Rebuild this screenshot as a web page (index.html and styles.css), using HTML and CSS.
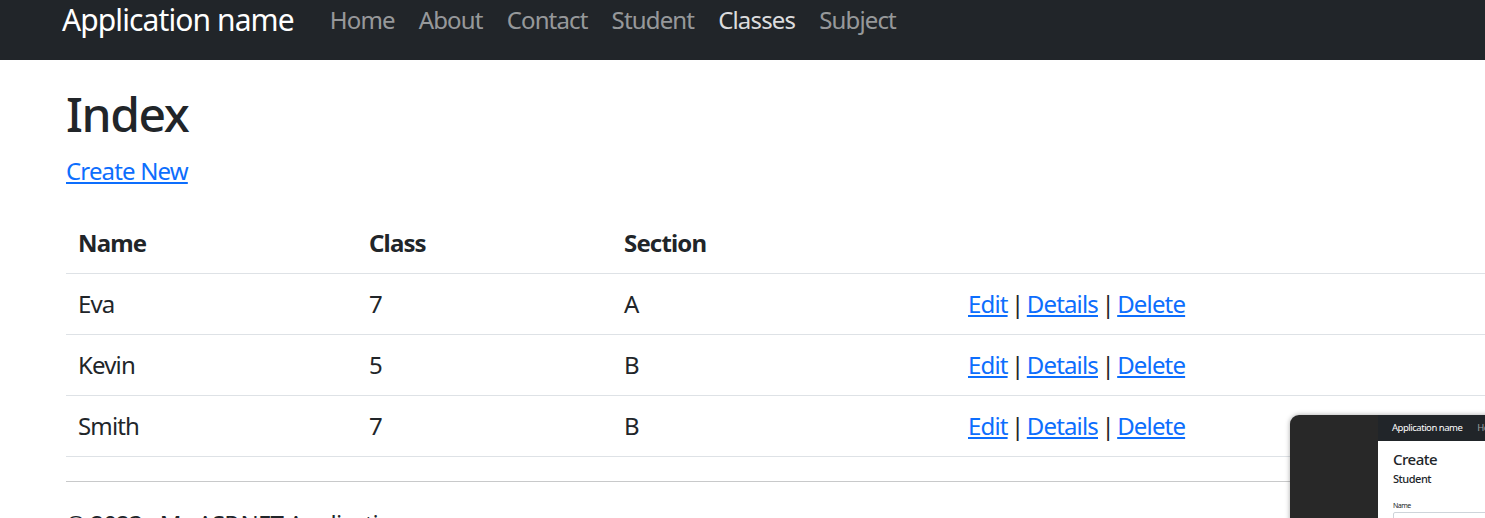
FILE: index.html
```html
<!DOCTYPE html>
<html lang="en">
<head>
<meta charset="utf-8">
<title>Index - My ASP.NET Application</title>
<link rel="stylesheet" href="styles.css">
</head>
<body>
<nav class="navbar">
  <a class="brand" href="#">Application name</a>
  <ul class="nav">
    <li><a class="nav-link" href="#">Home</a></li>
    <li><a class="nav-link" href="#">About</a></li>
    <li><a class="nav-link" href="#">Contact</a></li>
    <li><a class="nav-link" href="#">Student</a></li>
    <li><a class="nav-link active" href="#">Classes</a></li>
    <li><a class="nav-link" href="#">Subject</a></li>
  </ul>
</nav>
<main class="content">
  <h1 class="title">Index</h1>
  <p class="create"><a href="#">Create New</a></p>
  <table class="table">
    <colgroup>
      <col class="c-name"><col class="c-class"><col class="c-section"><col>
    </colgroup>
    <thead>
      <tr><th>Name</th><th>Class</th><th>Section</th><th></th></tr>
    </thead>
    <tbody>
      <tr><td>Eva</td><td>7</td><td>A</td><td class="actions"><a href="#">Edit</a> | <a href="#">Details</a> | <a href="#">Delete</a></td></tr>
      <tr><td>Kevin</td><td>5</td><td>B</td><td class="actions"><a href="#">Edit</a> | <a href="#">Details</a> | <a href="#">Delete</a></td></tr>
      <tr><td>Smith</td><td>7</td><td>B</td><td class="actions"><a href="#">Edit</a> | <a href="#">Details</a> | <a href="#">Delete</a></td></tr>
    </tbody>
  </table>
  <hr class="rule">
  <footer class="footer"><p>&copy; 2023 - My ASP.NET Application</p></footer>
</main>
<div class="thumb">
  <div class="thumb-page">
    <div class="thumb-nav"><span class="thumb-brand">Application name</span><span class="thumb-link">Home</span></div>
    <div class="thumb-body">
      <div class="thumb-h">Create</div>
      <div class="thumb-sub">Student</div>
      <div class="thumb-label">Name</div>
      <div class="thumb-input"></div>
    </div>
  </div>
</div>
</body>
</html>
```

FILE: styles.css
```css
html, body {
  margin: 0;
  padding: 0;
  overflow: hidden;
  height: 100%;
}
body {
  font-family: "Noto Sans", "Open Sans", sans-serif;
  font-size: 24px;
  line-height: 36px;
  letter-spacing: -0.035em;
  color: #212529;
  background: #fff;
  position: relative;
}
a { color: #0d6efd; }

.navbar {
  display: flex;
  align-items: flex-start;
  height: 60px;
  background: #212529;
  padding: 2px 0 0 62px;
  box-sizing: border-box;
}
.brand {
  font-size: 30px;
  line-height: 36px;
  letter-spacing: -0.03em;
  color: #fff;
  text-decoration: none;
  margin-right: 24px;
}
.nav {
  display: flex;
  list-style: none;
  margin: 0;
  padding: 0;
}
.nav-link {
  display: block;
  padding: 0 12px;
  font-size: 24px;
  line-height: 36px;
  color: rgba(255,255,255,.55);
  text-decoration: none;
}
.nav-link.active { color: rgba(255,255,255,.85); }

.content {
  padding-left: 66px;
}
.title {
  font-size: 48px;
  font-weight: 500;
  line-height: 60px;
  letter-spacing: -0.03em;
  margin: 24px 0 9px;
}
.create {
  margin: 0 0 24px;
}
.table {
  width: 1600px;
  border-collapse: collapse;
  margin-bottom: 24px;
}
.c-name { width: 291px; }
.c-class { width: 255px; }
.c-section { width: 344px; }
.table th, .table td {
  padding: 12px;
  text-align: left;
  vertical-align: top;
  border-bottom: 1px solid #dee2e6;
}
.table th { font-weight: 700; }
.actions { word-spacing: -2px; }
.actions a { word-spacing: normal; }
.rule {
  margin: 0 0 24px;
  border: 0;
  border-top: 1px solid #c8c9ca;
  width: 1600px;
}
.footer p { margin: 0; }

.thumb {
  position: absolute;
  left: 1290px;
  top: 415px;
  width: 260px;
  height: 140px;
  background: #282828;
  border-radius: 9px 0 0 0;
  box-shadow: 0 0 5px rgba(0,0,0,.35);
  padding-left: 88px;
  box-sizing: border-box;
  letter-spacing: -0.02em;
}
.thumb-page {
  background: #fff;
  height: 100%;
  font-family: "Noto Sans", sans-serif;
}
.thumb-nav {
  height: 26px;
  background: #212529;
  display: flex;
  align-items: center;
  padding-left: 14px;
  font-size: 9.5px;
  line-height: 12px;
}
.thumb-brand { color: #fff; }
.thumb-link { color: #9a9c9e; margin-left: 15px; }
.thumb-body {
  padding: 8px 0 0 15px;
}
.thumb-h {
  font-size: 15px;
  line-height: 20px;
  font-weight: 500;
}
.thumb-sub {
  font-size: 11px;
  line-height: 14px;
  font-weight: 500;
  margin-top: 3px;
}
.thumb-label {
  font-size: 7px;
  line-height: 9px;
  margin-top: 15px;
}
.thumb-input {
  margin-top: 2px;
  height: 12px;
  border: 1px solid #ced4da;
  border-radius: 2px;
}
```
